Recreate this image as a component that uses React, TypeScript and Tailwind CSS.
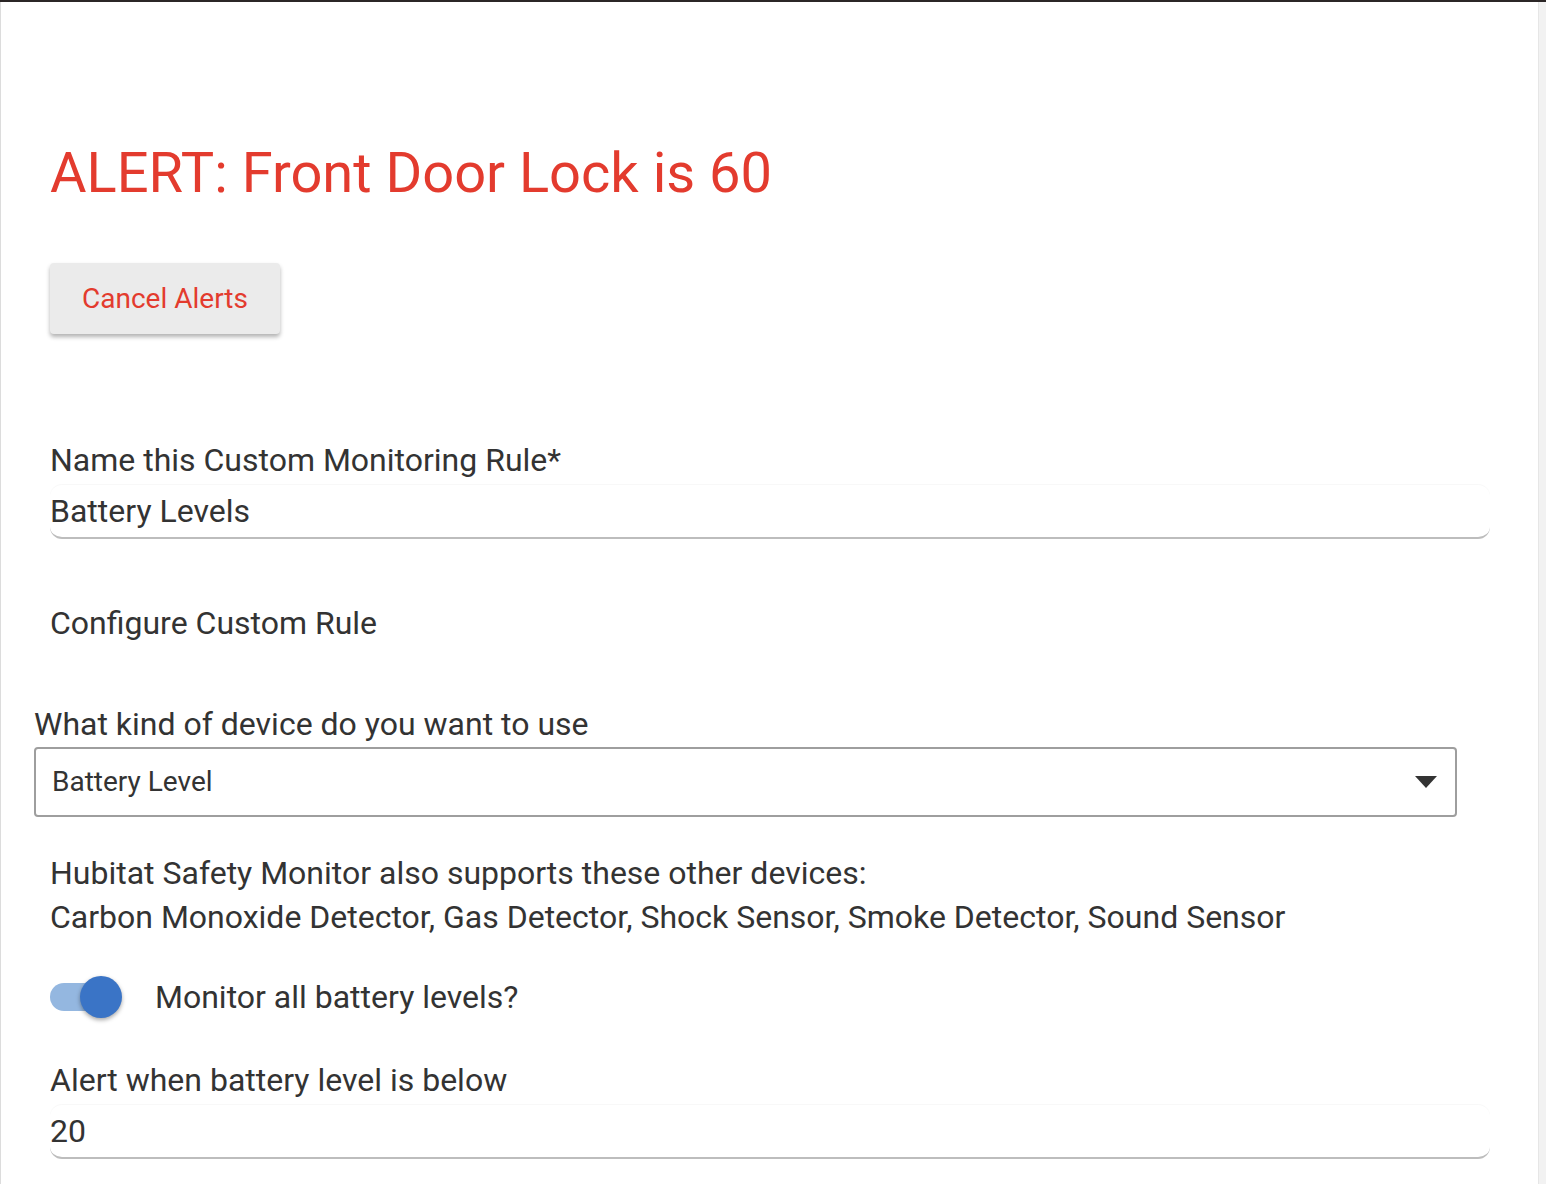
import { useState } from 'react';

export default function App() {
  const [on, setOn] = useState(true);
  return (
    <div className="flex min-h-[1184px] w-full border-t-2 border-[#2b2626] bg-white font-['Roboto',sans-serif] text-[#333]">
      <div className="flex-1 border-l border-[#dcdcdc] pl-[49px] pr-[48px]">
        {/* Alert header */}
        <h1 className="mt-[134px] text-[56px] leading-[74px] text-[#e33b2e]">ALERT: Front Door Lock is 60</h1>
        <button className="mt-[53px] h-[71px] w-[230px] rounded-[4px] bg-[#ebebeb] text-[28px] text-[#e33b2e] shadow-[0_3px_4px_rgba(0,0,0,0.3)]">
          Cancel Alerts
        </button>

        {/* Name */}
        <div className="mt-[106px] text-[32px] leading-[40px]">Name this Custom Monitoring Rule*</div>
        <div className="mt-[5px] flex h-[54px] items-center rounded-[12px] border-b-2 border-[#bdbdbd] shadow-[0_-1px_1px_rgba(0,0,0,0.03)]">
          <span className="text-[32px]">Battery Levels</span>
        </div>

        <div className="mt-[64px] text-[32px] leading-[40px]">Configure Custom Rule</div>

        {/* Device kind */}
        <div className="-ml-[16px] mr-[33px]">
          <div className="mt-[61px] text-[32px] leading-[40px]">What kind of device do you want to use</div>
          <div className="mt-[3px] flex h-[70px] items-center justify-between rounded-[4px] border-2 border-[#9e9e9e] pl-[16px] pr-[18px]">
            <span className="text-[28px]">Battery Level</span>
            <svg width="22" height="12" viewBox="0 0 22 12"><path d="M0 0h22L11 12z" fill="#333" /></svg>
          </div>
        </div>

        <div className="mt-[34px] text-[32px] leading-[44px]">
          <div>Hubitat Safety Monitor also supports these other devices:</div>
          <div>Carbon Monoxide Detector, Gas Detector, Shock Sensor, Smoke Detector, Sound Sensor</div>
        </div>

        {/* Toggle */}
        <div className="mt-[34px] flex items-center">
          <button onClick={() => setOn(!on)} className="relative h-[42px] w-[72px]">
            <span className={`absolute left-0 top-[7px] h-[28px] w-[66px] rounded-full ${on ? 'bg-[#94b7e0]' : 'bg-[#bdbdbd]'}`} />
            <span className={`absolute top-0 h-[42px] w-[42px] rounded-full shadow-[0_2px_4px_rgba(0,0,0,0.35)] ${on ? 'left-[30px] bg-[#3a74c6]' : 'left-0 bg-[#fafafa]'}`} />
          </button>
          <span className="ml-[33px] text-[32px]">Monitor all battery levels?</span>
        </div>

        {/* Threshold */}
        <div className="mt-[39px] text-[32px] leading-[40px]">Alert when battery level is below</div>
        <div className="mt-[5px] flex h-[54px] items-center rounded-[12px] border-b-2 border-[#bdbdbd] shadow-[0_-1px_1px_rgba(0,0,0,0.03)]">
          <span className="text-[32px]">20</span>
        </div>
      </div>
      <div className="w-[8px] border-l border-[#e6e6e6] bg-[#f2f2f2]" />
    </div>
  );
}
